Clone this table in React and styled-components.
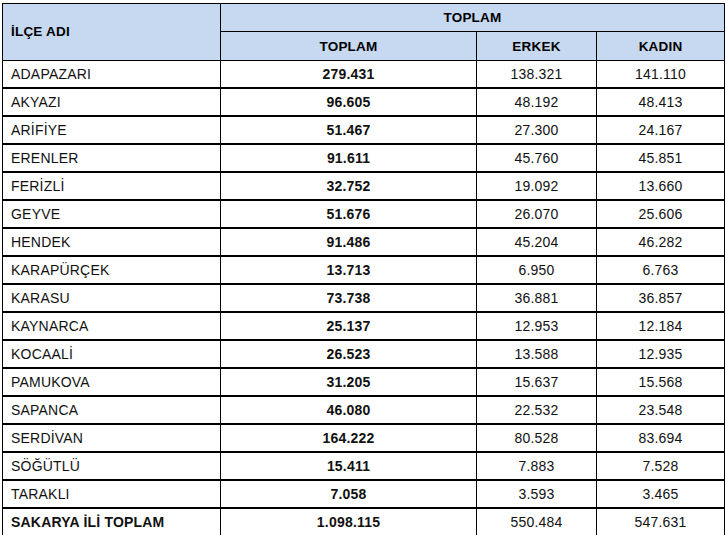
import React from "react";
import styled, { createGlobalStyle } from "styled-components";

const GlobalStyle = createGlobalStyle`
  html, body {
    margin: 0;
    padding: 0;
    background: #fff;
  }
  body {
    font-family: "Liberation Sans", Arial, sans-serif;
    color: #000;
  }
`;

const Wrapper = styled.div`
  padding: 3px 0 0 2px;
`;

const Table = styled.table`
  width: 722px;
  table-layout: fixed;
  border-collapse: collapse;
  border: 1px solid #000;
  font-size: 14px;
  letter-spacing: 0.2px;
`;

const HeadCell = styled.th`
  background: #c6d9f1;
  border: 1px solid #000;
  height: 27.4px;
  padding: 0 8px;
  font-weight: bold;
  font-size: 13.5px;
  text-align: ${(p) => (p.left ? "left" : "center")};
  vertical-align: middle;
`;

const Row = styled.tr`
  & + & td {
    border-top: 2px solid #000;
  }
`;

const Cell = styled.td`
  border: 1px solid #000;
  height: 26px;
  padding: 0 8px;
  color: #111;
  font-weight: ${(p) => (p.bold ? "bold" : "normal")};
  text-align: ${(p) => (p.left ? "left" : "center")};
  vertical-align: middle;
  white-space: nowrap;
`;

const rows = [
  ["ADAPAZARI", "279.431", "138.321", "141.110"],
  ["AKYAZI", "96.605", "48.192", "48.413"],
  ["ARİFİYE", "51.467", "27.300", "24.167"],
  ["ERENLER", "91.611", "45.760", "45.851"],
  ["FERİZLİ", "32.752", "19.092", "13.660"],
  ["GEYVE", "51.676", "26.070", "25.606"],
  ["HENDEK", "91.486", "45.204", "46.282"],
  ["KARAPÜRÇEK", "13.713", "6.950", "6.763"],
  ["KARASU", "73.738", "36.881", "36.857"],
  ["KAYNARCA", "25.137", "12.953", "12.184"],
  ["KOCAALİ", "26.523", "13.588", "12.935"],
  ["PAMUKOVA", "31.205", "15.637", "15.568"],
  ["SAPANCA", "46.080", "22.532", "23.548"],
  ["SERDİVAN", "164.222", "80.528", "83.694"],
  ["SÖĞÜTLÜ", "15.411", "7.883", "7.528"],
  ["TARAKLI", "7.058", "3.593", "3.465"],
];

const App = () => (
  <Wrapper>
    <GlobalStyle />
    <Table>
      <colgroup>
        <col style={{ width: 218 }} />
        <col style={{ width: 256 }} />
        <col style={{ width: 120 }} />
        <col style={{ width: 128 }} />
      </colgroup>
      <thead>
        <tr>
          <HeadCell left rowSpan={2}>
            İLÇE ADI
          </HeadCell>
          <HeadCell colSpan={3}>TOPLAM</HeadCell>
        </tr>
        <tr>
          <HeadCell>TOPLAM</HeadCell>
          <HeadCell>ERKEK</HeadCell>
          <HeadCell>KADIN</HeadCell>
        </tr>
      </thead>
      <tbody>
        {rows.map((r) => (
          <Row key={r[0]}>
            <Cell left>{r[0]}</Cell>
            <Cell bold>{r[1]}</Cell>
            <Cell>{r[2]}</Cell>
            <Cell>{r[3]}</Cell>
          </Row>
        ))}
        <Row>
          <Cell left bold>
            SAKARYA İLİ TOPLAM
          </Cell>
          <Cell bold>1.098.115</Cell>
          <Cell>550.484</Cell>
          <Cell>547.631</Cell>
        </Row>
      </tbody>
    </Table>
  </Wrapper>
);

export default App;
